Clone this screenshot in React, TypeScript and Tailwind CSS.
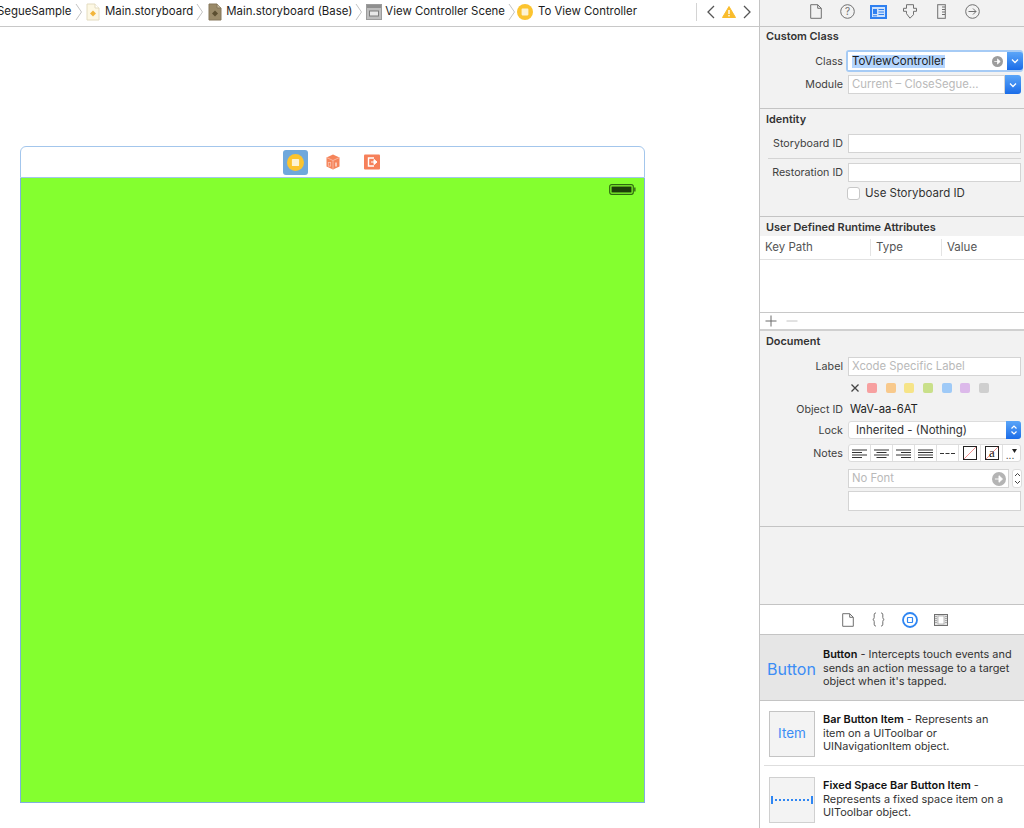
import { ReactNode } from "react";

const FONT = "font-['Inter','Liberation_Sans',sans-serif]";

function Chevron({ className }: { className?: string }) {
  return (
    <svg width="8" height="20" viewBox="0 0 8 20" className={`shrink-0 ${className ?? ""}`}>
      <path d="M1 2l5.5 8L1 18" fill="none" stroke="#c4c4c4" strokeWidth="1" />
    </svg>
  );
}

function StoryboardIcon({ base = false, className }: { base?: boolean; className?: string }) {
  return (
    <svg width="14" height="18" viewBox="0 0 14 18" className={`shrink-0 ${className ?? ""}`}>
      <path
        d="M1 1h8l4 4v12H1z"
        fill={base ? "#9a8a68" : "#fdf8e4"}
        stroke={base ? "#85775a" : "#e4dcc0"}
      />
      <path d="M9 1v4h4" fill={base ? "#c8bda2" : "#fff"} stroke={base ? "#85775a" : "#e4dcc0"} />
      <path d="M7 7.5l3 3-3 3-3-3z" fill={base ? "#5c4f30" : "#f2b53a"} />
    </svg>
  );
}

function SceneIcon({ className }: { className?: string }) {
  return (
    <svg width="16" height="16" viewBox="0 0 16 16" className={`shrink-0 ${className ?? ""}`}>
      <rect x="0.5" y="0.5" width="15" height="15" fill="#bdbdbd" stroke="#9c9c9c" />
      <rect x="1" y="1" width="14" height="3" fill="#8f8f8f" />
      <rect x="3.5" y="7" width="9" height="5" fill="#e8e8e8" stroke="#7d7d7d" />
    </svg>
  );
}

function ControllerIcon({ size = 16, className }: { size?: number; className?: string }) {
  return (
    <svg width={size} height={size} viewBox="0 0 16 16" className={`shrink-0 ${className ?? ""}`}>
      <circle cx="8" cy="8" r="8" fill="#fcc42f" />
      <rect x="4.6" y="4.6" width="6.8" height="6.8" rx="0.8" fill="#fdf3d2" />
    </svg>
  );
}

function Crumb({ className, children }: { className?: string; children: ReactNode }) {
  return (
    <span className={`whitespace-nowrap text-[11.4px] text-[#1c1c1c] ${className ?? ""}`}>{children}</span>
  );
}

function TopBar() {
  return (
    <div className="flex h-[27px] items-center justify-between overflow-hidden border-b border-[#c8c8c8] bg-white pb-[3px]">
      <div className="ml-[-3px] flex items-center">
        <Crumb className="w-[74px] shrink-0 pt-[1px]">SegueSample</Crumb>
        <Chevron className="ml-[4px]" />
        <StoryboardIcon className="ml-[3px]" />
        <Crumb className="ml-[5px] pt-[1px]">Main.storyboard</Crumb>
        <Chevron className="ml-[3px]" />
        <StoryboardIcon base className="ml-[4px]" />
        <Crumb className="ml-[4px] pt-[1px]">Main.storyboard (Base)</Crumb>
        <Chevron className="ml-[3px]" />
        <SceneIcon className="ml-[3px]" />
        <Crumb className="ml-[3px] pt-[1px]">View Controller Scene</Crumb>
        <Chevron className="ml-[3px]" />
        <ControllerIcon className="ml-[1px]" />
        <Crumb className="ml-[5px] pt-[1px]">To View Controller</Crumb>
      </div>
      <div className="flex items-center">
        <div className="mr-[9px] h-[18px] w-px bg-[#d4d4d4]" />
        <svg width="10" height="14" viewBox="0 0 10 14">
          <path d="M8 1L2 7l6 6" fill="none" stroke="#555" strokeWidth="1.3" />
        </svg>
        <svg width="14" height="12" viewBox="0 0 14 12" className="ml-[6px]">
          <path d="M7 0.5L13.5 11.5H0.5z" fill="#f9bc2c" stroke="#f9bc2c" strokeLinejoin="round" />
          <rect x="6.3" y="4" width="1.4" height="4" fill="#fff" />
          <rect x="6.3" y="9" width="1.4" height="1.4" fill="#fff" />
        </svg>
        <svg width="10" height="14" viewBox="0 0 10 14" className="ml-[6px] mr-[7px]">
          <path d="M2 1l6 6-6 6" fill="none" stroke="#555" strokeWidth="1.3" />
        </svg>
      </div>
    </div>
  );
}

function Scene() {
  return (
    <div className="ml-[20px] mt-[119px] w-[625px]">
      <div className="flex h-[32px] items-center justify-center rounded-t-[6px] border border-[#a3c6ec] bg-white">
        <div className="ml-[-2px] flex items-center">
          <div className="flex h-[25px] w-[25px] items-center justify-center rounded-[3px] bg-[#6fa8dc]">
            <ControllerIcon size={17} />
          </div>
          <svg width="16" height="16" viewBox="0 0 16 16" className="ml-[17px]">
            <path d="M8 0.5l6.5 3v9L8 15.5l-6.5-3v-9z" fill="#f5845a" />
            <path d="M1.5 3.5L8 6.5l6.5-3M8 6.5v9" fill="none" stroke="#fbc2ae" strokeWidth="0.8" />
            <path d="M11 8.5v4" stroke="#fff" strokeWidth="1.1" />
            <rect x="3.3" y="8.5" width="2.4" height="3.6" fill="none" stroke="#fbc2ae" strokeWidth="0.8" />
          </svg>
          <svg width="16" height="16" viewBox="0 0 16 16" className="ml-[23px]">
            <rect width="16" height="15" y="0.5" rx="1" fill="#f6805a" />
            <path d="M10 4H4.5v8H10" fill="none" stroke="#fff" strokeWidth="1.4" />
            <path d="M7 8h4.5M10 5.5L13 8l-3 2.5z" fill="#fff" stroke="#fff" />
          </svg>
        </div>
      </div>
      <div className="flex h-[625px] justify-end border-x border-b border-[#7fb0de] bg-[#84ff2f] pr-[8px] pt-[6px]">
        <svg width="27" height="11" viewBox="0 0 27 11">
          <rect x="0.7" y="0.7" width="23.6" height="9.6" rx="2" fill="none" stroke="#2f6a10" strokeWidth="1.2" />
          <rect x="2.5" y="2.5" width="20" height="6" fill="#1d3d0a" />
          <rect x="25" y="3.5" width="1.6" height="4" fill="#3f7a1a" />
        </svg>
      </div>
    </div>
  );
}

function Label({ children }: { children: ReactNode }) {
  return (
    <div className="w-[83px] shrink-0 whitespace-nowrap pt-[2px] text-right text-[10.7px] text-[#3f3f3f]">
      {children}
    </div>
  );
}

function Row({ label, className, children }: { label: string; className?: string; children: ReactNode }) {
  return (
    <div className={`flex items-center gap-[5px] ${className ?? ""}`}>
      <Label>{label}</Label>
      {children}
    </div>
  );
}

function Field({ placeholder, className }: { placeholder?: string; className?: string }) {
  return (
    <div
      className={`flex h-[19px] w-[173px] items-center border border-[#d4d4d4] bg-white pl-[3px] text-[11.3px] text-[#b9b9b9] ${className ?? ""}`}
    >
      {placeholder}
    </div>
  );
}

function Heading({ children }: { children: ReactNode }) {
  return <div className="pl-[6px] text-[10.9px] font-semibold leading-[14px] text-[#333]">{children}</div>;
}

function BlueChevron({ className }: { className?: string }) {
  return (
    <div className={`flex w-[16px] items-center justify-center rounded-r-[3px] bg-gradient-to-b from-[#5aa5f8] to-[#1a6ce8] ${className ?? ""}`}>
      <svg width="8" height="6" viewBox="0 0 8 6">
        <path d="M1 1.5l3 3 3-3" fill="none" stroke="#fff" strokeWidth="1.3" />
      </svg>
    </div>
  );
}

function GoArrow({ size = 11, color = "#9c9c9c" }: { size?: number; color?: string }) {
  return (
    <svg width={size} height={size} viewBox="0 0 12 12" className="shrink-0">
      <circle cx="6" cy="6" r="6" fill={color} />
      <path d="M2.5 6h5M6 3.2L9 6 6 8.8z" fill="#fff" stroke="#fff" strokeWidth="0.8" />
    </svg>
  );
}

function InspectorTabs() {
  return (
    <div className="flex h-[27px] items-center border-b border-[#c4c4c4] pb-[3px] pl-[50px]">
      <svg width="12" height="15" viewBox="0 0 12 15">
        <path d="M0.7 0.7h7l3.6 3.6v10H0.7z M7.7 0.7v3.6h3.6" fill="none" stroke="#707070" />
      </svg>
      <svg width="15" height="15" viewBox="0 0 15 15" className="ml-[18px]">
        <circle cx="7.5" cy="7.5" r="6.8" fill="none" stroke="#707070" />
        <text x="7.5" y="11" textAnchor="middle" fontSize="10" fill="#707070">?</text>
      </svg>
      <svg width="17" height="14" viewBox="0 0 17 14" className="ml-[15px]">
        <rect width="17" height="14" fill="#2f80f0" />
        <rect x="2" y="2" width="13" height="10" fill="#cfe2fb" />
        <rect x="3" y="4" width="4" height="5" fill="#2f80f0" />
        <path d="M8.5 4.5H14M8.5 7H14M8.5 9.5H14M3 10.8h4" stroke="#2f80f0" />
      </svg>
      <svg width="14" height="15" viewBox="0 0 14 15" className="ml-[16px]">
        <path d="M3.5 0.7h7v3.6h3v3h-3v3.4L7 14.2l-3.5-4.5V7.3h-3v-3h3z" fill="none" stroke="#707070" />
      </svg>
      <svg width="9" height="15" viewBox="0 0 9 15" className="ml-[20px]">
        <rect x="0.7" y="0.7" width="7.6" height="13.6" fill="none" stroke="#707070" />
        <path d="M5 3h3M5 5.5h3M5 8h3M5 10.5h3" stroke="#707070" />
      </svg>
      <svg width="15" height="15" viewBox="0 0 15 15" className="ml-[19px]">
        <circle cx="7.5" cy="7.5" r="6.8" fill="none" stroke="#707070" />
        <path d="M3.5 7.5h7.5M8 4.5l3 3-3 3" fill="none" stroke="#707070" />
      </svg>
    </div>
  );
}

function CustomClass() {
  return (
    <div className="h-[82px] border-b border-[#c4c4c4] pt-[2px]">
      <Heading>Custom Class</Heading>
      <Row label="Class" className="mt-[7px]">
        <div className="ml-[-2px] flex h-[22px] w-[177px] rounded-[3px] bg-[#a6cbf5] p-[2px] pr-0">
          <div className="flex min-w-0 flex-1 items-center bg-white pl-[4px] pr-[4px]">
            <span className="bg-[#b4d5fe] text-[11.5px] leading-[13px] text-[#1c1c1c]">ToViewController</span>
            <span className="ml-auto"><GoArrow /></span>
          </div>
          <BlueChevron />
        </div>
      </Row>
      <Row label="Module" className="mt-[3px]">
        <div className="flex h-[19px] w-[173px]">
          <div className="flex flex-1 items-center border border-[#d4d4d4] bg-white pl-[3px] text-[11.3px] text-[#b9b9b9]">
            Current – CloseSegue...
          </div>
          <BlueChevron />
        </div>
      </Row>
    </div>
  );
}

function Identity() {
  return (
    <div className="h-[108px] border-b border-[#c4c4c4] pt-[3px]">
      <Heading>Identity</Heading>
      <Row label="Storyboard ID" className="mt-[8px]">
        <Field />
      </Row>
      <div className="ml-[8px] mr-[3px] mt-[5px] h-px bg-[#d4d4d4]" />
      <Row label="Restoration ID" className="mt-[4px]">
        <Field />
      </Row>
      <div className="ml-[87px] mt-[3px] flex items-center gap-[5px]">
        <div className="h-[13px] w-[13px] rounded-[3px] border border-[#c8c8c8] bg-white" />
        <span className="text-[11.5px] text-[#333]">Use Storyboard ID</span>
      </div>
    </div>
  );
}

function RuntimeAttributes() {
  return (
    <div>
      <div className="h-[19px] pt-[3px]">
        <Heading>User Defined Runtime Attributes</Heading>
      </div>
      <div className="flex h-[24px] items-center border-b border-[#e2e2e2] bg-white text-[11.5px] text-[#555]">
        <div className="w-[111px] border-r border-[#e4e4e4] pl-[5px]">Key Path</div>
        <div className="w-[71px] border-r border-[#e4e4e4] pl-[5px]">Type</div>
        <div className="pl-[5px]">Value</div>
      </div>
      <div className="h-[53px] border-b border-[#c8c8c8] bg-white" />
      <div className="flex h-[18px] items-center border-b-2 border-[#d0d0d0] bg-white pl-[5px]">
        <svg width="12" height="12" viewBox="0 0 12 12">
          <path d="M6 0.5v11M0.5 6h11" stroke="#6a6a6a" />
        </svg>
        <svg width="12" height="12" viewBox="0 0 12 12" className="ml-[9px]">
          <path d="M0.5 6h11" stroke="#c4c4c4" />
        </svg>
      </div>
    </div>
  );
}

const LABEL_COLORS = ["#f7a0a0", "#f8c98c", "#f6e488", "#c9e08a", "#9fcaf7", "#dcb9ea", "#cfcfcf"];

function NoteButton({ children }: { children: ReactNode }) {
  return (
    <div className="flex h-[16px] w-[22px] items-center justify-center border-r border-[#e0e0e0] last:border-r-0">
      {children}
    </div>
  );
}

function AlignIcon({ lines }: { lines: string }) {
  return (
    <svg width="15" height="9" viewBox="0 0 15 9">
      <path d={lines} stroke="#333" strokeWidth="1" />
    </svg>
  );
}

function Document() {
  return (
    <div className="h-[196px] border-b border-[#c4c4c4] pt-[3px]">
      <Heading>Document</Heading>
      <Row label="Label" className="mt-[9px]">
        <Field placeholder="Xcode Specific Label" />
      </Row>
      <div className="ml-[90px] mt-[5px] flex h-[14px] items-center">
        <svg width="10" height="10" viewBox="0 0 10 10">
          <path d="M1.5 1.5l7 7M8.5 1.5l-7 7" stroke="#444" strokeWidth="1.3" />
        </svg>
        <div className="ml-[7px] flex gap-[8.7px]">
          {LABEL_COLORS.map((c) => (
            <div key={c} className="h-[10px] w-[10px] rounded-[2px]" style={{ backgroundColor: c }} />
          ))}
        </div>
      </div>
      <Row label="Object ID" className="mt-[7px] h-[15px]">
        <span className="ml-[2px] text-[11.3px] text-[#222]">WaV-aa-6AT</span>
      </Row>
      <Row label="Lock" className="mt-[4px]">
        <div className="flex h-[18px] w-[173px] rounded-[3px] border border-[#dcdcdc] bg-white pl-[7px] text-[11.5px] leading-[16px] text-[#333]">
          <span className="flex-1">Inherited - (Nothing)</span>
          <div className="my-[-1px] mr-[-1px] flex w-[15px] items-center justify-center rounded-r-[3px] bg-gradient-to-b from-[#5aa5f8] to-[#1a6ce8]">
            <svg width="8" height="12" viewBox="0 0 8 12">
              <path d="M1.5 4.5L4 2l2.5 2.5M1.5 7.5L4 10l2.5-2.5" fill="none" stroke="#fff" strokeWidth="1.2" />
            </svg>
          </div>
        </div>
      </Row>
      <Row label="Notes" className="mt-[5px]">
        <div className="flex h-[18px] w-[173px] items-center rounded-[3px] border border-[#dcdcdc] bg-white">
          <NoteButton><AlignIcon lines="M0 1h15M0 3.5h10M0 6h15M0 8.5h10" /></NoteButton>
          <NoteButton><AlignIcon lines="M0 1h15M2.5 3.5h10M0 6h15M2.5 8.5h10" /></NoteButton>
          <NoteButton><AlignIcon lines="M0 1h15M5 3.5h10M0 6h15M5 8.5h10" /></NoteButton>
          <NoteButton><AlignIcon lines="M0 1h15M0 3.5h15M0 6h15M0 8.5h15" /></NoteButton>
          <NoteButton>
            <svg width="15" height="3" viewBox="0 0 15 3">
              <path d="M0 1.5h15" stroke="#333" strokeDasharray="4 1.5" />
            </svg>
          </NoteButton>
          <NoteButton>
            <svg width="14" height="14" viewBox="0 0 14 14">
              <rect x="0.5" y="0.5" width="13" height="13" fill="#fff" stroke="#222" />
              <path d="M1 13L13 1" stroke="#ef8f8f" />
            </svg>
          </NoteButton>
          <NoteButton>
            <svg width="14" height="14" viewBox="0 0 14 14">
              <rect x="0.5" y="0.5" width="13" height="13" fill="#fff" stroke="#222" />
              <path d="M1 13L13 1" stroke="#ef8f8f" />
              <text x="7" y="11" textAnchor="middle" fontSize="13" fill="#222" fontFamily="Liberation Serif, serif">a</text>
            </svg>
          </NoteButton>
          <div className="relative flex flex-1 items-center justify-center text-[10px] leading-none text-[#333]">
            <span className="ml-[-3px] mt-[3px]">...</span>
            <svg width="5" height="4" viewBox="0 0 5 4" className="absolute right-[3px] top-[2px]">
              <path d="M0 0h5L2.5 4z" fill="#222" />
            </svg>
          </div>
        </div>
      </Row>
      <div className="ml-[88px] mt-[7px] flex items-center">
        <div className="flex h-[19px] w-[161px] items-center justify-between border border-[#d4d4d4] bg-white pl-[3px] pr-[2px] text-[11.3px] text-[#b9b9b9]">
          No Font
          <GoArrow size={14} color="#b4b4b4" />
        </div>
        <div className="ml-[3px] flex h-[19px] w-[10px] items-center justify-center rounded-[3px] border border-[#dcdcdc] bg-white">
          <svg width="7" height="13" viewBox="0 0 7 13">
            <path d="M1 4l2.5-2.5L6 4M1 9l2.5 2.5L6 9" fill="none" stroke="#444" />
          </svg>
        </div>
      </div>
      <Field className="ml-[88px] mt-[3px] h-[20px]" />
    </div>
  );
}

function LibraryTabs() {
  return (
    <div className="flex h-[31px] items-center border-y border-[#c4c4c4] bg-white pl-[82px]">
      <svg width="12" height="14" viewBox="0 0 12 14">
        <path d="M0.7 0.7h7l3.6 3.6v9H0.7z M7.7 0.7v3.6h3.6" fill="none" stroke="#707070" />
      </svg>
      <svg width="13" height="15" viewBox="0 0 13 15" className="ml-[18px]">
        <path
          d="M4 1C2.5 1 2.2 1.6 2.2 3v2.6C2.2 6.6 1.7 7.2 0.8 7.5c.9.3 1.4.9 1.4 1.9V12c0 1.4.3 2 1.8 2M9 1c1.5 0 1.8.6 1.8 2v2.6c0 1 .5 1.6 1.4 1.9-.9.3-1.4.9-1.4 1.9V12c0 1.4-.3 2-1.8 2"
          fill="none"
          stroke="#707070"
        />
      </svg>
      <svg width="16" height="16" viewBox="0 0 16 16" className="ml-[17px]">
        <circle cx="8" cy="8" r="7" fill="none" stroke="#2f86f2" strokeWidth="1.8" />
        <rect x="5.5" y="5.5" width="5" height="5" rx="0.5" fill="none" stroke="#2f86f2" strokeWidth="1.2" />
      </svg>
      <svg width="14" height="12" viewBox="0 0 14 12" className="ml-[16px]">
        <rect x="0.5" y="0.5" width="13" height="11" fill="#e4e4e4" stroke="#707070" />
        <rect x="4" y="2" width="6" height="8" fill="#fff" stroke="#909090" strokeWidth="0.6" />
        <path d="M2 2v8M12 2v8" stroke="#707070" strokeDasharray="1 1" />
      </svg>
    </div>
  );
}

function LibraryText({ title, children }: { title: string; children: ReactNode }) {
  return (
    <div className="text-[10.9px] leading-[13.5px] text-[#333]">
      <b className="font-semibold text-[#111]">{title}</b>
      {children}
    </div>
  );
}

function Library() {
  return (
    <div className="flex-1 overflow-hidden bg-white">
      <div className="flex h-[66px] items-center border-b border-[#c4c4c4] bg-[#e6e6e6] pt-[2px]">
        <div className="w-[63px] shrink-0 pl-[7px] text-[16px] text-[#3b8df5]">Button</div>
        <LibraryText title="Button">
          {" - Intercepts touch events and"}<br />sends an action message to a target<br />object when it's tapped.
        </LibraryText>
      </div>
      <div className="ml-[4px] flex h-[65px] items-center border-b border-[#dedede] pl-[5px] pt-[1px]">
        <div className="flex h-[46px] w-[46px] shrink-0 items-center justify-center border border-[#c4c4c4] bg-[#f3f3f3] text-[13.5px] text-[#3b8df5]">
          Item
        </div>
        <div className="ml-[8px]">
          <LibraryText title="Bar Button Item">
            {" - Represents an"}<br />item on a UIToolbar or<br />UINavigationItem object.
          </LibraryText>
        </div>
      </div>
      <div className="ml-[4px] flex h-[66px] items-center pl-[5px] pt-[1px]">
        <div className="flex h-[46px] w-[46px] shrink-0 items-center justify-center border border-[#d0d0d0] bg-[#f3f3f3]">
          <svg width="42" height="10" viewBox="0 0 42 10">
            <path d="M1 1v8M41 1v8" stroke="#2f86f2" strokeWidth="2" />
            <path d="M4 5h34" stroke="#2f86f2" strokeWidth="2" strokeDasharray="2 2" />
          </svg>
        </div>
        <div className="ml-[8px]">
          <LibraryText title="Fixed Space Bar Button Item">
            {" -"}<br />Represents a fixed space item on a<br />UIToolbar object.
          </LibraryText>
        </div>
      </div>
    </div>
  );
}

export default function App() {
  return (
    <div className={`flex h-[828px] w-[1024px] overflow-hidden bg-white ${FONT}`}>
      <div className="w-[759px] shrink-0">
        <TopBar />
        <Scene />
      </div>
      <div className="flex w-[265px] shrink-0 flex-col border-l border-[#c4c4c4] bg-[#f2f2f2]">
        <InspectorTabs />
        <CustomClass />
        <Identity />
        <RuntimeAttributes />
        <Document />
        <div className="h-[77px]" />
        <LibraryTabs />
        <Library />
      </div>
    </div>
  );
}
